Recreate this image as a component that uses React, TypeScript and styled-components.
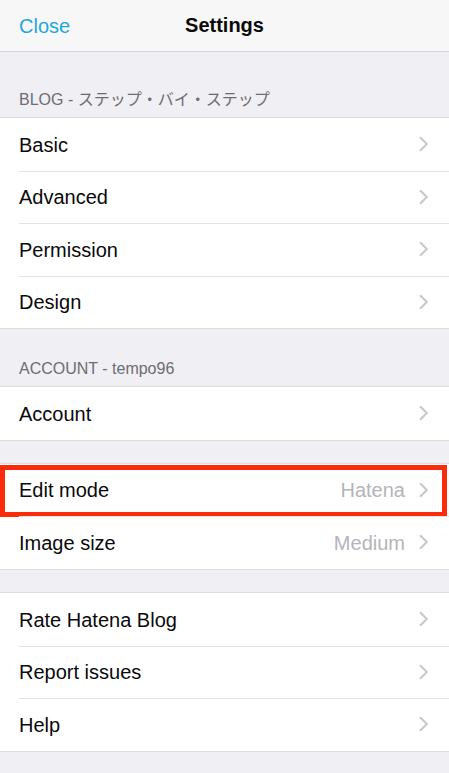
import { createGlobalStyle } from 'styled-components'
import styled from 'styled-components'

const GlobalStyle = createGlobalStyle`
  html, body {
    margin: 0;
    padding: 0;
    background: #efeff4;
  }
  body {
    font-family: 'Liberation Sans', Arial, 'Noto Sans CJK JP', sans-serif;
    -webkit-font-smoothing: antialiased;
  }
`

const Screen = styled.div`
  width: 449px;
  min-height: 773px;
  background: #efeff4;
`

const NavBar = styled.header`
  position: relative;
  height: 51px;
  display: flex;
  align-items: center;
  justify-content: center;
  background: #f7f7f8;
  border-bottom: 1px solid #d6d6da;
`

const NavButton = styled.button`
  position: absolute;
  left: 19px;
  top: 50%;
  transform: translateY(-50%);
  margin: 0;
  padding: 0;
  border: 0;
  background: none;
  font: inherit;
  font-size: 20px;
  color: #1ea7dc;
  cursor: pointer;
`

const NavTitle = styled.h1`
  margin: 0;
  font-size: 20px;
  font-weight: 700;
  color: #0a0a0a;
`

const SectionHeader = styled.div<{ $height: number }>`
  height: ${({ $height }) => $height}px;
  display: flex;
  align-items: flex-end;
  padding: 0 19px 9px;
  box-sizing: border-box;
  font-size: 16px;
  line-height: 19px;
  color: #6d6d72;
`

const Spacer = styled.div<{ $height: number }>`
  height: ${({ $height }) => $height}px;
`

const Group = styled.ul`
  margin: 0;
  padding: 0;
  list-style: none;
  background: #fff;
  box-shadow: 0 -1px 0 #dcdce0, 0 1px 0 #dcdce0;
`

const Row = styled.li`
  position: relative;
  height: 52.5px;
  display: flex;
  align-items: center;
  padding: 2px 21px 0 19px;
  box-sizing: border-box;
  font-size: 20px;
  color: #0a0a0a;

  & + &::before {
    content: '';
    position: absolute;
    left: 19px;
    right: 0;
    top: 0;
    height: 1px;
    background: #e2e2e6;
  }
`

const Label = styled.span`
  flex: 1;
`

const Value = styled.span`
  margin-right: 14px;
  color: #b4b4b9;
`

const ChevronIcon = styled.svg`
  display: block;
  margin-top: -2px;
`

const Highlight = styled.div`
  position: absolute;
  left: 0;
  right: 2px;
  top: 1.5px;
  height: 52px;
  border: 5px solid #fb2b0c;
  box-sizing: border-box;
  pointer-events: none;
`

function Chevron() {
  return (
    <ChevronIcon width="9" height="16" viewBox="0 0 9 16" fill="none">
      <path d="M1 1.2 L7.8 8 L1 14.8" stroke="#c7c7cc" strokeWidth="2" />
    </ChevronIcon>
  )
}

interface Item {
  label: string
  value?: string
  highlighted?: boolean
}

function SettingsGroup({ items }: { items: Item[] }) {
  return (
    <Group>
      {items.map((item) => (
        <Row key={item.label}>
          <Label>{item.label}</Label>
          {item.value && <Value>{item.value}</Value>}
          <Chevron />
          {item.highlighted && <Highlight />}
        </Row>
      ))}
    </Group>
  )
}

export default function App() {
  return (
    <Screen>
      <GlobalStyle />
      <NavBar>
        <NavButton>Close</NavButton>
        <NavTitle>Settings</NavTitle>
      </NavBar>

      <SectionHeader $height={66}>BLOG - ステップ・バイ・ステップ</SectionHeader>
      <SettingsGroup
        items={[{ label: 'Basic' }, { label: 'Advanced' }, { label: 'Permission' }, { label: 'Design' }]}
      />

      <SectionHeader $height={59}>ACCOUNT - tempo96</SectionHeader>
      <SettingsGroup items={[{ label: 'Account' }]} />

      <Spacer $height={24} />
      <SettingsGroup
        items={[
          { label: 'Edit mode', value: 'Hatena', highlighted: true },
          { label: 'Image size', value: 'Medium' },
        ]}
      />

      <Spacer $height={24.5} />
      <SettingsGroup items={[{ label: 'Rate Hatena Blog' }, { label: 'Report issues' }, { label: 'Help' }]} />
    </Screen>
  )
}
